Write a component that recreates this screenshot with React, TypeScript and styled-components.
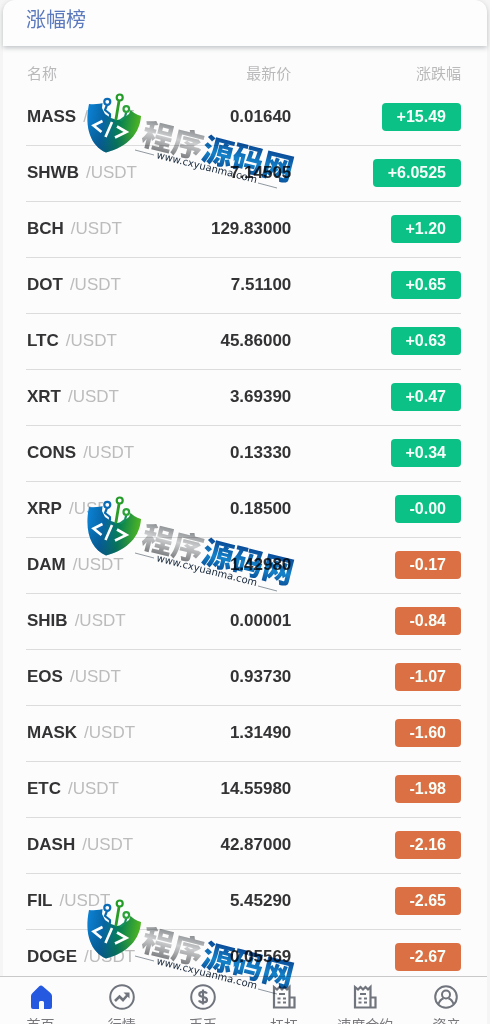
import React from 'react';
import styled, { createGlobalStyle } from 'styled-components';

const GlobalStyle = createGlobalStyle`
  * { box-sizing: border-box; }
  body {
    margin: 0;
    background: #f5f5f5;
    font-family: "Liberation Sans", "Noto Sans CJK SC", sans-serif;
    color: #333;
  }
`;

const Shell = styled.div`
  position: relative;
  display: flex;
  flex-direction: column;
  height: 100vh;
  padding: 0 3px;
  overflow: hidden;
`;

const Header = styled.header`
  position: relative;
  flex: none;
  height: 46px;
  padding: 6px 23px;
  background: #fdfdfd;
  border-radius: 12px 12px 0 0;
  box-shadow: 0 2px 5px rgba(40, 50, 60, 0.28);
`;

const Title = styled.h1`
  margin: 0;
  font-size: 20px;
  line-height: 28px;
  font-weight: 400;
  color: #5b79bd;
`;

const Main = styled.main`
  flex: 1;
  min-height: 0;
  overflow: hidden;
  padding: 13px 26px 0 23px;
  background: #fcfcfc;
`;

const Table = styled.table`
  width: 100%;
  border-collapse: collapse;
  table-layout: fixed;
`;

const Th = styled.th<{ $width: string; $end?: boolean }>`
  width: ${(p) => p.$width};
  height: 30px;
  padding: ${(p) => (p.$end ? '0' : '0 0 0 1px')};
  font-size: 15px;
  line-height: 20px;
  font-weight: 400;
  color: #b9b9bb;
  text-align: ${(p) => (p.$end ? 'right' : 'left')};
`;

const Row = styled.tr`
  height: 56px;
  border-bottom: 1px solid #dcdcdc;
`;

const Td = styled.td<{ $end?: boolean }>`
  padding: ${(p) => (p.$end ? '0' : '0 0 0 1px')};
  font-size: 17px;
  line-height: 24px;
  white-space: nowrap;
  text-align: ${(p) => (p.$end ? 'right' : 'left')};
`;

const Coin = styled.strong`
  margin-right: 7px;
  color: #333335;
`;

const Quote = styled.span`
  color: #bcbcbc;
`;

const Price = styled.strong`
  color: #333335;
`;

const Change = styled.span<{ $down: boolean }>`
  display: inline-block;
  padding: 0 15px;
  border-radius: 4px;
  font-size: 16px;
  line-height: 28px;
  font-weight: 700;
  vertical-align: middle;
  color: #f6fff9;
  background: ${(p) => (p.$down ? '#dc7045' : '#0bc185')};
`;

const Nav = styled.nav`
  flex: none;
  display: grid;
  grid-template-columns: repeat(6, 1fr);
  height: 48px;
  margin: 0 0 0 -3px;
  overflow: hidden;
  background: #fcfcfc;
  border-top: 1px solid #c9c9c9;
`;

const NavLink = styled.a<{ $active?: boolean }>`
  display: flex;
  flex-direction: column;
  align-items: center;
  gap: 5px;
  padding-top: 7px;
  font-size: 14px;
  line-height: 20px;
  text-decoration: none;
  white-space: nowrap;
  color: #77777c;

  svg {
    flex: none;
    color: ${(p) => (p.$active ? '#2459e0' : '#70747c')};
  }
`;

const Marks = styled.div`
  position: absolute;
  top: 90px;
  left: 86px;
  display: flex;
  flex-direction: column;
  gap: 303px;
  pointer-events: none;

  svg {
    display: block;
  }
`;

const Blend = styled.g`
  mix-blend-mode: multiply;
`;

const BrandText = styled.text`
  font-family: "Noto Sans CJK SC", sans-serif;
  font-size: 31px;
  font-weight: 900;
`;

const UrlText = styled.text`
  font-family: "DejaVu Sans", sans-serif;
  font-size: 10px;
`;

function Watermark({ id }: { id: string }) {
  return (
    <svg width="214" height="100" viewBox="0 0 214 100" overflow="visible">
      <defs>
        <linearGradient id={`${id}-shield`} x1="0" y1="0.35" x2="1" y2="0.5">
          <stop offset="0" stopColor="#0b7fd0" />
          <stop offset="0.3" stopColor="#0764a4" />
          <stop offset="0.6" stopColor="#078052" />
          <stop offset="1" stopColor="#54b91e" />
        </linearGradient>
        <linearGradient id={`${id}-shade`} x1="0.6" y1="0.2" x2="0.35" y2="1">
          <stop offset="0.4" stopColor="#064a70" stopOpacity="0" />
          <stop offset="1" stopColor="#064a70" stopOpacity="0.5" />
        </linearGradient>
        <linearGradient id={`${id}-silver`} x1="0" y1="0" x2="0" y2="1">
          <stop offset="0.2" stopColor="#8d9093" />
          <stop offset="0.5" stopColor="#cfd1d2" />
          <stop offset="0.9" stopColor="#77797c" />
        </linearGradient>
        <linearGradient id={`${id}-blue`} x1="0" y1="0" x2="0" y2="1">
          <stop offset="0.25" stopColor="#0b4f9c" />
          <stop offset="0.6" stopColor="#1484cd" />
          <stop offset="0.95" stopColor="#07468f" />
        </linearGradient>
      </defs>
      <path
        d="M3 14C9 14.500 14 14 19 12.500L43 18C46 22 50 24.500 55 26C54 43 42 57 20 62.500C5 56 -2 38 3 14Z"
        fill={`url(#${id}-shield)`}
      />
      <path
        d="M3 14C9 14.500 14 14 19 12.500L43 18C46 22 50 24.500 55 26C54 43 42 57 20 62.500C5 56 -2 38 3 14Z"
        fill={`url(#${id}-shade)`}
      />
      <path d="M17 9L37 5L46 16L43 24L36 29L31 30L25 28L19 24L16 18Z" fill="#fbfcfc" />
      <g fill="none" strokeLinecap="round" strokeLinejoin="round">
        <path d="M21 15L19 20L24 24V27" stroke="#0868ae" strokeWidth="2.200" />
        <path d="M33 11L30 29" stroke="#2b9d27" strokeWidth="2.800" />
        <path d="M40 23L39 27L35 30" stroke="#149060" strokeWidth="2.200" />
        <circle cx="21.300" cy="11.800" r="3" fill="#fff" stroke="#0c6bb5" strokeWidth="2.200" />
        <circle cx="33.700" cy="7.500" r="3" fill="#fff" stroke="#239b27" strokeWidth="2.200" />
        <circle cx="40.300" cy="19" r="2.800" fill="#fff" stroke="#2ca339" strokeWidth="2.200" />
      </g>
      <g fill="none" stroke="#fff" strokeWidth="2.600">
        <path d="M16.500 31L7.500 35.500L15.500 42M31 36.500L40.500 42L29 47.500" />
        <path d="M26 32L19.500 47" />
      </g>
      <Blend>
        <g transform="translate(54 54) rotate(14)">
          <BrandText>
            <tspan fill={`url(#${id}-silver)`}>程序</tspan>
            <tspan fill={`url(#${id}-blue)`}>源码网</tspan>
          </BrandText>
        </g>
        <g transform="translate(70 68) rotate(14)">
          <UrlText fill="#18283c">www.cxyuanma.com</UrlText>
        </g>
        <path d="M49 60L68 65M172 93L191 98" stroke="#75808a" strokeWidth="0.8" />
      </Blend>
    </svg>
  );
}

const HomeIcon = () => (
  <svg width="26" height="26" viewBox="0 0 26 26" fill="currentColor">
    <path d="M13 1.500Q14 1.500 15 2.500L22.500 9Q24 10.500 24 12V23Q24 25 22 25H16V18.500Q16 17 14.500 17H12.500Q11 17 11 18.500V25H5Q3 25 3 23V12Q3 10.500 4.500 9L11 2.500Q12 1.500 13 1.500Z" />
  </svg>
);

const TrendIcon = () => (
  <svg width="26" height="26" viewBox="0 0 26 26" fill="none" stroke="currentColor" strokeWidth="2">
    <circle cx="13" cy="13" r="11.800" />
    <path d="M6 17L10.500 12.500L14 16L19 10.500" strokeWidth="2.600" />
    <path d="M14.500 8.500H20.500V14.500Z" fill="currentColor" stroke="none" />
  </svg>
);

const DollarIcon = () => (
  <svg width="26" height="26" viewBox="0 0 26 26" fill="none" stroke="currentColor" strokeWidth="2">
    <circle cx="13" cy="13" r="11.800" />
    <path d="M17 9.500Q16 7.800 13 7.800Q9.300 7.800 9.300 10.300Q9.300 12.500 13 13Q17 13.500 17 16Q17 18.400 13 18.400Q9.800 18.400 9 16.300M13 5.500V20.500" strokeWidth="2.200" />
  </svg>
);

const BillIcon = () => (
  <svg width="26" height="26" viewBox="0 0 26 26" fill="none" stroke="currentColor" strokeWidth="2.200">
    <path d="M18.500 23.500H3V3L6 5.500L8.500 3L11 5.500L13.500 3L16 5.500L18.500 3V23.500H23.500V13.500H18.500" />
    <path d="M8 10H14M6.500 14.500H9.500M12 14.500H15M6.500 18.500H9.500M12 18.500H15" />
  </svg>
);

const UserIcon = () => (
  <svg width="26" height="26" viewBox="0 0 26 26" fill="none" stroke="currentColor" strokeWidth="2">
    <circle cx="13" cy="13" r="10.800" />
    <circle cx="13" cy="10.500" r="4" />
    <path d="M5.500 20Q7 15.500 10.500 14.500M15.500 14.500Q19 15.500 20.500 20" />
  </svg>
);

const rows: [string, string, string][] = [
  ['MASS', '0.01640', '+15.49'],
  ['SHWB', '7.14505', '+6.0525'],
  ['BCH', '129.83000', '+1.20'],
  ['DOT', '7.51100', '+0.65'],
  ['LTC', '45.86000', '+0.63'],
  ['XRT', '3.69390', '+0.47'],
  ['CONS', '0.13330', '+0.34'],
  ['XRP', '0.18500', '-0.00'],
  ['DAM', '1.42980', '-0.17'],
  ['SHIB', '0.00001', '-0.84'],
  ['EOS', '0.93730', '-1.07'],
  ['MASK', '1.31490', '-1.60'],
  ['ETC', '14.55980', '-1.98'],
  ['DASH', '42.87000', '-2.16'],
  ['FIL', '5.45290', '-2.65'],
  ['DOGE', '0.05569', '-2.67'],
];

const tabs = [
  { label: '首页', Icon: HomeIcon },
  { label: '行情', Icon: TrendIcon },
  { label: '币币', Icon: DollarIcon },
  { label: '杠杠', Icon: BillIcon },
  { label: '速度合约', Icon: BillIcon },
  { label: '资产', Icon: UserIcon },
];

export default function App() {
  return (
    <>
      <GlobalStyle />
      <Shell>
        <Header>
          <Title>涨幅榜</Title>
        </Header>
        <Main>
          <Table>
            <thead>
              <tr>
                <Th $width="34%">名称</Th>
                <Th $width="27%" $end>最新价</Th>
                <Th $width="39%" $end>涨跌幅</Th>
              </tr>
            </thead>
            <tbody>
              {rows.map(([coin, price, change]) => (
                <Row key={coin}>
                  <Td>
                    <Coin>{coin}</Coin>
                    <Quote>/USDT</Quote>
                  </Td>
                  <Td $end>
                    <Price>{price}</Price>
                  </Td>
                  <Td $end>
                    <Change $down={change.startsWith('-') && change !== '-0.00'}>{change}</Change>
                  </Td>
                </Row>
              ))}
            </tbody>
          </Table>
        </Main>
        <Nav>
          {tabs.map(({ label, Icon }, i) => (
            <NavLink key={label} href="#" $active={i === 0}>
              <Icon />
              {label}
            </NavLink>
          ))}
        </Nav>
        <Marks aria-hidden="true">
          <Watermark id="wm1" />
          <Watermark id="wm2" />
          <Watermark id="wm3" />
        </Marks>
      </Shell>
    </>
  );
}
